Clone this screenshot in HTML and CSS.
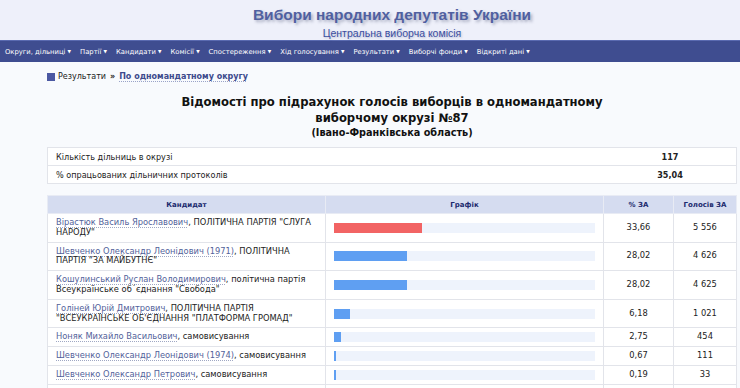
FILE: index.html
```html
<!doctype html>
<html lang="uk">

<head>
    <meta charset="utf-8">
    <title>Вибори народних депутатів України</title>
    <link rel="stylesheet" href="styles.css">
</head>

<body>
    <div class="header">
        <div class="page">
            <div class="site-title">Вибори народних депутатів України</div>
            <a class="site-sub" href="#">Центральна виборча комісія</a>
        </div>
    </div>

    <div class="menu">
        <a href="#">Округи, дільниці <span class="caret">▼</span></a>
        <a href="#">Партії <span class="caret">▼</span></a>
        <a href="#">Кандидати <span class="caret">▼</span></a>
        <a href="#">Комісії <span class="caret">▼</span></a>
        <a href="#">Спостереження <span class="caret">▼</span></a>
        <a href="#">Хід голосування <span class="caret">▼</span></a>
        <a href="#">Результати <span class="caret">▼</span></a>
        <a href="#">Виборчі фонди <span class="caret">▼</span></a>
        <a href="#">Відкриті дані <span class="caret">▼</span></a>
    </div>

    <div class="page content">
        <div class="crumbs">
            <span class="crumb-icon"></span>
            Результати <span class="raquo">»</span> <a href="#">По одномандатному округу</a>
        </div>

        <h1>Відомості про підрахунок голосів виборців в одномандатному<br>виборчому окрузі №87</h1>
        <h2>(Івано-Франківська область)</h2>

        <table class="info">
            <tr>
                <td>Кількість дільниць в окрузі</td>
                <td class="val">117</td>
            </tr>
            <tr>
                <td>% опрацьованих дільничних протоколів</td>
                <td class="val">35,04</td>
            </tr>
        </table>

        <table class="results">
            <tr>
                <th class="c-name">Кандидат</th>
                <th class="c-chart">Графік</th>
                <th class="c-pct">% ЗА</th>
                <th class="c-votes">Голосів ЗА</th>
            </tr>
            <tr>
                <td><a href="#">Вірастюк Василь Ярославович</a>, ПОЛІТИЧНА ПАРТІЯ "СЛУГА НАРОДУ"</td>
                <td><div class="track"><div class="bar lead" style="width: 33.66%"></div></div></td>
                <td class="num">33,66</td>
                <td class="num">5 556</td>
            </tr>
            <tr>
                <td><a href="#">Шевченко Олександр Леонідович (1971)</a>, ПОЛІТИЧНА ПАРТІЯ "ЗА МАЙБУТНЄ"</td>
                <td><div class="track"><div class="bar" style="width: 28.02%"></div></div></td>
                <td class="num">28,02</td>
                <td class="num">4 626</td>
            </tr>
            <tr>
                <td><a href="#">Кошулинський Руслан Володимирович</a>, політична партія Всеукраїнське об´єднання "Свобода"</td>
                <td><div class="track"><div class="bar" style="width: 28.02%"></div></div></td>
                <td class="num">28,02</td>
                <td class="num">4 625</td>
            </tr>
            <tr>
                <td><a href="#">Голіней Юрій Дмитрович</a>, ПОЛІТИЧНА ПАРТІЯ "ВСЕУКРАЇНСЬКЕ ОБ'ЄДНАННЯ "ПЛАТФОРМА ГРОМАД"</td>
                <td><div class="track"><div class="bar" style="width: 6.18%"></div></div></td>
                <td class="num">6,18</td>
                <td class="num">1 021</td>
            </tr>
            <tr>
                <td><a href="#">Ноняк Михайло Васильович</a>, самовисування</td>
                <td><div class="track"><div class="bar" style="width: 2.75%"></div></div></td>
                <td class="num">2,75</td>
                <td class="num">454</td>
            </tr>
            <tr>
                <td><a href="#">Шевченко Олександр Леонідович (1974)</a>, самовисування</td>
                <td><div class="track"><div class="bar" style="width: 0.67%"></div></div></td>
                <td class="num">0,67</td>
                <td class="num">111</td>
            </tr>
            <tr>
                <td><a href="#">Шевченко Олександр Петрович</a>, самовисування</td>
                <td><div class="track"><div class="bar" style="width: 0.19%"></div></div></td>
                <td class="num">0,19</td>
                <td class="num">33</td>
            </tr>
            <tr>
                <td>&nbsp;</td>
                <td>&nbsp;</td>
                <td class="num">&nbsp;</td>
                <td class="num">&nbsp;</td>
            </tr>
        </table>
    </div>
</body>

</html>
```

FILE: styles.css
```css
html {
    overflow: hidden;
}

body {
    margin: 0;
    background: #f8fafd;
    font-family: "DejaVu Sans", Verdana, sans-serif;
    font-size: 8.1px;
    color: #222;
}

.page {
    width: 784px;
}

.header {
    height: 40px;
    background: #eef0fa;
    text-align: center;
    font-family: "Liberation Sans", Arial, sans-serif;
}

.site-title {
    padding-top: 6px;
    font-size: 15.5px;
    font-weight: bold;
    line-height: 18px;
    color: #5060a0;
    text-shadow: 2px 2px 3px rgba(40, 50, 90, .35);
}

.site-sub {
    display: inline-block;
    margin-top: 3px;
    font-size: 10.5px;
    line-height: 12px;
    color: #3b4da0;
    text-decoration: none;
    text-shadow: 1px 1px 2px rgba(40, 50, 90, .25);
}

.menu {
    display: flex;
    height: 22px;
    align-items: center;
    gap: 9px;
    padding-left: 5px;
    background: #3f4d90;
    border-top: 1px solid #5a6ab0;
    box-sizing: border-box;
}

.menu a {
    color: #fff;
    font-size: 6.8px;
    text-decoration: none;
    white-space: nowrap;
}

.caret {
    font-size: 4.5px;
    vertical-align: 1px;
}

.content {
    box-sizing: border-box;
    padding-left: 47px;
    padding-right: 47px;
}

.crumbs {
    display: flex;
    align-items: center;
    gap: 3px;
    margin-top: 9px;
    font-size: 8px;
    line-height: 12px;
}

.crumb-icon {
    width: 8px;
    height: 8px;
    background: #4b58a2;
}

.raquo {
    font-weight: bold;
    margin: 0 1px;
}

.crumbs a {
    color: #3d4a8c;
    font-weight: bold;
    text-decoration: underline dotted #9aa3c8;
    text-underline-offset: 2px;
}

h1 {
    margin: 11px 0 0;
    font-size: 11.6px;
    line-height: 16px;
    text-align: center;
    color: #111;
}

h2 {
    margin: 0;
    font-size: 9.7px;
    line-height: 14px;
    text-align: center;
    color: #111;
}

table {
    width: 100%;
    border-collapse: collapse;
    background: #fff;
}

td,
th {
    border: 1px solid #e2e4ea;
    padding: 0 8px;
}

.info {
    margin-top: 7px;
}

.info td {
    height: 17px;
    border-left: 0;
    border-right: 0;
}

.info td:first-child {
    border-left: 1px solid #e2e4ea;
}

.info td:last-child {
    border-right: 1px solid #e2e4ea;
}

.info .val {
    width: 116px;
    text-align: center;
    font-weight: bold;
}

.results {
    margin-top: 11px;
    table-layout: fixed;
}

.results th {
    height: 17px;
    background: #d5dcf0;
    color: #1c2a6e;
    font-size: 7px;
    font-weight: bold;
    border-color: #e8ebf4;
}

.results td {
    font-size: 8.3px;
    line-height: 9.8px;
    padding-top: 4px;
    padding-bottom: 4px;
}

.c-name {
    width: 261px;
}

.c-chart {
    width: 261px;
}

.c-pct {
    width: 53px;
}

.results a {
    color: #52629a;
    text-decoration: underline dotted #a0a8c4;
    text-underline-offset: 2px;
}

.results .num {
    text-align: center;
}

.track {
    height: 10px;
    background: #eef3fc;
}

.bar {
    height: 100%;
    min-width: 2px;
    background: #5f9ff2;
}

.bar.lead {
    background: #f26464;
}
```
